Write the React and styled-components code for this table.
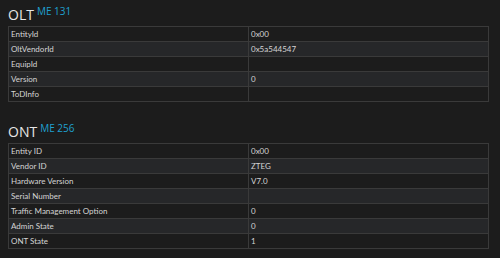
import styled, { createGlobalStyle } from "styled-components";

const GlobalStyle = createGlobalStyle`
    html, body {
        margin: 0;
        padding: 0;
        background-color: #1c1c1c;
    }
    body {
        font-family: "Open Sans", "Noto Sans", sans-serif;
        color: #d2d2d2;
    }
`;

const Page = styled.div`
    width: 500px;
    height: 258px;
    box-sizing: border-box;
    padding: 0 11px 0 8px;
    overflow: hidden;
`;

const Section = styled.section`
    margin-bottom: 15px;
`;

const Title = styled.h2`
    margin: 0;
    height: 26px;
    display: flex;
    align-items: flex-end;
    padding-bottom: 4px;
    box-sizing: border-box;
    font-weight: normal;
    font-size: 14px;
    line-height: 1;
    color: #e6e6e6;
    sup {
        font-size: 10px;
        color: #1fa0cf;
        margin-left: 3px;
        align-self: flex-start;
        margin-top: 6px;
    }
`;

const Table = styled.table`
    width: 481px;
    border-collapse: collapse;
    table-layout: fixed;
    border: 1px solid #3a3a3a;
    tr:nth-child(even) {
        background-color: #262729;
    }
    td {
        height: 14px;
        padding: 0 0 0 2px;
        border: 1px solid #3a3a3a;
        font-family: Lato, "Open Sans", sans-serif;
        font-size: 8px;
        line-height: 14px;
        white-space: nowrap;
        color: #d4d4d4;
    }
`;

const olt = [
    ["EntityId", "0x00"],
    ["OltVendorId", "0x5a544547"],
    ["EquipId", ""],
    ["Version", "0"],
    ["ToDInfo", ""],
];

const ont = [
    ["Entity ID", "0x00"],
    ["Vendor ID", "ZTEG"],
    ["Hardware Version", "V7.0"],
    ["Serial Number", ""],
    ["Traffic Management Option", "0"],
    ["Admin State", "0"],
    ["ONT State", "1"],
];

function Block({ name, me, rows }) {
    return (
        <Section>
            <Title>
                {name}
                <sup>ME {me}</sup>
            </Title>
            <Table>
                <tbody>
                    {rows.map(([k, v]) => (
                        <tr key={k}>
                            <td>{k}</td>
                            <td>{v}</td>
                        </tr>
                    ))}
                </tbody>
            </Table>
        </Section>
    );
}

export default function App() {
    return (
        <Page>
            <GlobalStyle />
            <Block name="OLT" me={131} rows={olt} />
            <Block name="ONT" me={256} rows={ont} />
        </Page>
    );
}
